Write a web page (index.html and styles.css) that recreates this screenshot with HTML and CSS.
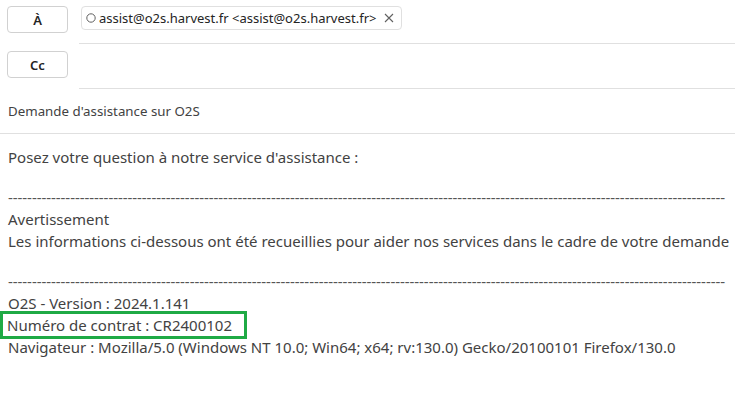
FILE: index.html
```html
<!DOCTYPE html>
<html lang="fr">
<head>
<meta charset="utf-8">
<link rel="stylesheet" href="styles.css">
</head>
<body>
<div class="compose">
  <div class="row row-to">
    <div class="label"><button class="btn">À</button></div>
    <div class="field">
      <span class="chip">
        <svg class="presence" width="10" height="10" viewBox="0 0 10 10"><circle cx="5" cy="5" r="4.2" fill="none" stroke="#616161" stroke-width="1"/></svg>
        <span class="chip-text">assist@o2s.harvest.fr &lt;assist@o2s.harvest.fr&gt;</span>
        <svg class="close" width="10" height="10" viewBox="0 0 10 10"><path d="M1 1L9 9M9 1L1 9" stroke="#616161" stroke-width="1.1"/></svg>
      </span>
    </div>
  </div>
  <div class="row row-cc">
    <div class="label"><button class="btn">Cc</button></div>
    <div class="field"></div>
  </div>
  <div class="subject">Demande d'assistance sur O2S</div>
  <div class="body">
    <p class="line">Posez votre question à notre service d'assistance :</p>
    <p class="line blank">&nbsp;</p>
    <p class="line dashes">------------------------------------------------------------------------------------------------------------------------------------------------------</p>
    <p class="line">Avertissement</p>
    <p class="line">Les informations ci-dessous ont été recueillies pour aider nos services dans le cadre de votre demande</p>
    <p class="line blank">&nbsp;</p>
    <p class="line dashes">------------------------------------------------------------------------------------------------------------------------------------------------------</p>
    <p class="line">O2S - Version : 2024.1.141</p>
    <p class="line"><span class="highlight">Numéro de contrat : CR2400102</span></p>
    <p class="line">Navigateur : Mozilla/5.0 (Windows NT 10.0; Win64; x64; rv:130.0) Gecko/20100101 Firefox/130.0</p>
  </div>
</div>
</body>
</html>
```

FILE: styles.css
```css
html, body {
  margin: 0;
  padding: 0;
  background: #ffffff;
  overflow: hidden;
}
body {
  width: 735px;
  height: 417px;
  font-family: "Noto Sans", "Open Sans", sans-serif;
  color: #424242;
}
.compose {
  display: flex;
  flex-direction: column;
}
.row {
  display: flex;
}
.label {
  width: 79px;
  flex: none;
  padding-left: 7px;
  box-sizing: border-box;
}
.row-to {
  height: 44px;
}
.row-to .label {
  padding-top: 6px;
}
.row-cc {
  height: 45px;
}
.row-cc .label {
  padding-top: 7px;
}
.btn {
  width: 61px;
  height: 27px;
  border: 1px solid #d1d1d1;
  border-radius: 4px;
  background: #ffffff;
  font-family: "Noto Sans", sans-serif;
  font-size: 13px;
  font-weight: 600;
  color: #242424;
  padding: 0;
  display: flex;
  align-items: center;
  justify-content: center;
}
.field {
  flex: 1;
  border-bottom: 1px solid #e0e0e0;
  padding: 6px 0 0 2px;
}
.chip {
  display: inline-flex;
  align-items: center;
  height: 24px;
  box-sizing: border-box;
  border: 1px solid #e0e0e0;
  border-radius: 4px;
  padding: 0 7px 0 4px;
  gap: 3px;
}
.chip-text {
  font-size: 13px;
  color: #242424;
  white-space: nowrap;
}
.close {
  margin-left: 5px;
}
.subject {
  height: 45px;
  box-sizing: border-box;
  border-bottom: 1px solid #e0e0e0;
  padding-left: 8px;
  display: flex;
  align-items: center;
  font-size: 13.3px;
  color: #424242;
}
.body {
  padding: 12px 0 0 8px;
  font-size: 15px;
}
.line {
  margin: 0;
  line-height: 22px;
  white-space: nowrap;
}
.blank {
  line-height: 18px;
}
.dashes {
  color: #555555;
  letter-spacing: -0.05px;
}
.highlight {
  display: inline-block;
  padding: 0 12px 0 4px;
  margin-left: -5px;
  outline: 3px solid #1faa45;
  outline-offset: 0;
}
```
